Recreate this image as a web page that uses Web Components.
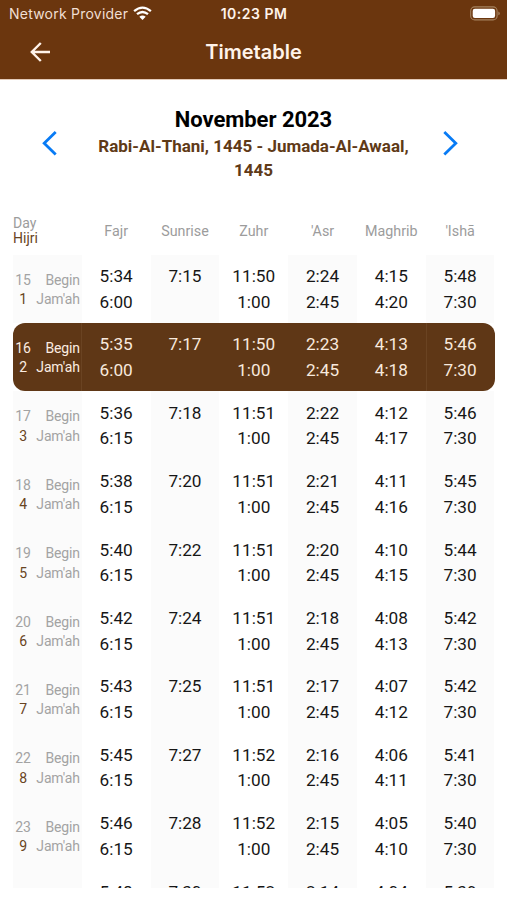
<!DOCTYPE html>
<html lang="en">
<head>
<meta charset="utf-8">
<title>Timetable</title>
<style>
body{margin:0;background:#fff;font-family:Roboto,sans-serif;overflow:hidden}
</style>
</head>
<body>
<timetable-app></timetable-app>
<script>
class AppHeader extends HTMLElement{
  connectedCallback(){
    this.attachShadow({mode:'open'}).innerHTML=`<style>
:host{display:block;height:80px;box-sizing:border-box;background:#6b360e;color:#fff3ea;font-family:Inter,sans-serif;border-bottom:1px solid #e3cbb8}
.status{display:grid;grid-template-columns:1fr auto 1fr;align-items:center;height:27px;padding:0 7px 0 9px}
.net{display:flex;align-items:center;gap:5px;font-size:14px;line-height:27px;color:#f1dfd3;letter-spacing:.23px;white-space:nowrap}
.time{font-size:14px;font-weight:600;letter-spacing:.5px;line-height:27px;margin-left:-1px}
.bat{justify-self:end}
svg{display:block}
.bar{display:grid;grid-template-columns:1fr auto 1fr;align-items:center;height:50px;padding-left:30px;padding-right:30px}
.title{font-size:20px;font-weight:600;letter-spacing:0;line-height:50px}
</style>
<div class="status"><div class="net"><span>Network Provider</span>
<svg width="19" height="15" viewBox="0 0 19 15" fill="none" stroke="#fff" stroke-width="2.3"><path d="M1.1 5.1Q9.5-1.9 17.9 5.1M4 8.2Q9.5 3.7 15 8.2"/><path d="M9.5 14L6.3 10.8Q9.5 8.3 12.7 10.8Z" fill="#fff" stroke="none"/></svg></div>
<div class="time">10:23 PM</div>
<svg class="bat" width="30" height="15" viewBox="0 0 30 15"><rect x=".7" y=".9" width="26.4" height="13" rx="4" fill="none" stroke="#a5825f" stroke-width="1.1"/><rect x="2.7" y="2.8" width="22.4" height="9.2" rx="2.2" fill="#fff"/><path d="M28.3 5.5Q29.8 6 29.8 7.4T28.3 9.3Z" fill="#a5825f"/></svg></div>
<div class="bar"><svg width="20" height="20" viewBox="0 0 20 20" fill="none" stroke="#fff3ea" stroke-width="2.4"><path d="M10.8 1L1.8 10L10.8 19M2 10H20"/></svg><div class="title"><slot></slot></div></div>`;
  }
}
customElements.define('app-header',AppHeader);

class MonthPicker extends HTMLElement{
  connectedCallback(){
    this.attachShadow({mode:'open'}).innerHTML=`<style>
:host{display:grid;grid-template-columns:16px 330px 16px;justify-content:center;column-gap:27px;padding:27px 0 0;height:136px;box-sizing:border-box;margin-right:7.6px}
svg{display:block;margin-top:23px}
.t{text-align:center;padding-left:3.8px;margin-right:-3.8px}
.m{font-size:22px;font-weight:700;line-height:26px;color:#000;letter-spacing:-.05px}
.h{font-size:17px;font-weight:700;line-height:23.6px;color:#5f3a17;padding-top:2px}
</style>
<svg width="16" height="26" viewBox="0 0 16 26" fill="none" stroke="#087bf5" stroke-width="2.8"><path d="M13.7 2L2.2 13.2L13.7 24.5"/></svg>
<div class="t"><div class="m"><slot name="month"></slot></div><div class="h"><slot name="hijri"></slot></div></div>
<svg width="16" height="26" viewBox="0 0 16 26" fill="none" stroke="#087bf5" stroke-width="2.8"><path d="M2.3 2L13.8 13.2L2.3 24.5"/></svg>`;
  }
}
customElements.define('month-picker',MonthPicker);

class PrayerRow extends HTMLElement{
  connectedCallback(){
    const d=this.getAttribute('data').split(' ');
    const cols=[];
    for(let i=0;i<6;i++){const jamah=d[8+i];cols.push(`<div class="c">${d[2+i]}${jamah&&jamah!=='-'?'<br>'+jamah:''}</div>`);}
    const label=d[0]==='-'?'':`<span class="n">${d[0]}</span><span class="l">Begin</span><span class="n j">${d[1]}</span><span class="l">Jam'ah</span>`;
    this.attachShadow({mode:'open'}).innerHTML=`<style>
:host{display:grid;grid-template-columns:repeat(7,1fr);height:68.4px;flex:none;color:#161616;overflow:hidden}
.c{font-size:17.2px;line-height:25.7px;text-align:center;padding-top:9.4px}
.c:nth-of-type(odd),.d{background:#fbfbfb}
.d{display:grid;grid-template-columns:20px 1fr;font-size:14px;letter-spacing:-.15px;line-height:19.4px;color:#a3a3a3;padding:16px 2px 0 0;align-content:start}
.n{text-align:center}.l{text-align:right}
.j{color:#684422}
:host([today]){background:#5f3716;color:#f8e9dd;border-radius:12px}
:host([today]) .c,:host([today]) .d{background:none}
:host([today]) .d,:host([today]) .j{color:#fbece1}
:host([today]) .d{box-shadow:inset -1px 0 #6a4322}
:host([today]) .c:last-child{box-shadow:inset 1px 0 #6a4322}
</style><div class="d">${label}</div>${cols.join('')}`;
  }
}
customElements.define('prayer-row',PrayerRow);

class TimetableApp extends HTMLElement{
  connectedCallback(){
    const rows=[
'15 1 5:34 7:15 11:50 2:24 4:15 5:48 6:00 - 1:00 2:45 4:20 7:30',
'16 2 5:35 7:17 11:50 2:23 4:13 5:46 6:00 - 1:00 2:45 4:18 7:30',
'17 3 5:36 7:18 11:51 2:22 4:12 5:46 6:15 - 1:00 2:45 4:17 7:30',
'18 4 5:38 7:20 11:51 2:21 4:11 5:45 6:15 - 1:00 2:45 4:16 7:30',
'19 5 5:40 7:22 11:51 2:20 4:10 5:44 6:15 - 1:00 2:45 4:15 7:30',
'20 6 5:42 7:24 11:51 2:18 4:08 5:42 6:15 - 1:00 2:45 4:13 7:30',
'21 7 5:43 7:25 11:51 2:17 4:07 5:42 6:15 - 1:00 2:45 4:12 7:30',
'22 8 5:45 7:27 11:52 2:16 4:06 5:41 6:15 - 1:00 2:45 4:11 7:30',
'23 9 5:46 7:28 11:52 2:15 4:05 5:40 6:15 - 1:00 2:45 4:10 7:30',
'- - 5:48 7:30 11:52 2:14 4:04 5:39'];
    this.attachShadow({mode:'open'}).innerHTML=`<style>
:host{display:flex;flex-direction:column;height:900px;background:#fff}
.head{display:grid;grid-template-columns:repeat(7,1fr);margin:0 12.5px 0 13px;height:38.6px;font-size:14.3px;line-height:30px;color:#9c9c9c;text-align:center}
.day{text-align:left;line-height:14.6px;font-size:14px}.day b{font-weight:400;color:#684422}
.rows{display:flex;flex-direction:column;margin:0 12.5px 0 13px;height:633px;overflow:hidden}
</style>
<app-header>Timetable</app-header>
<month-picker><span slot="month">November 2023</span><span slot="hijri">Rabi-Al-Thani, 1445 - Jumada-Al-Awaal, 1445</span></month-picker>
<div class="head"><div class="day">Day<br><b>Hijri</b></div><div>Fajr</div><div>Sunrise</div><div>Zuhr</div><div>'Asr</div><div>Maghrib</div><div>'Ishā</div></div>
<div class="rows">${rows.map((r,i)=>`<prayer-row data="${r}"${i===1?' today':''}></prayer-row>`).join('')}</div>`;
  }
}
customElements.define('timetable-app',TimetableApp);
</script>
</body>
</html>
